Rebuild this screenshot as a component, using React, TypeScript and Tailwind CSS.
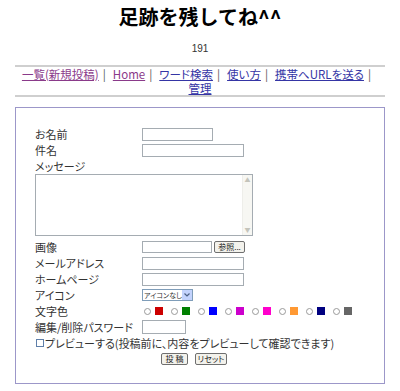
import React from 'react';

// 文字色の選択肢
const colors = ['#cc0000', '#008000', '#0000ff', '#cc00cc', '#ff00cc', '#ff9933', '#000080', '#666666'];

const jp = "font-['Noto_Sans_CJK_JP',sans-serif] [font-feature-settings:'palt']";

const Field = ({ w }: { w: string }) => (
  <input type="text" className={`${w} h-[13px] border border-[#a5acb2] bg-white outline-none`} />
);

const Row = ({ label, children }: { label: string; children?: React.ReactNode }) => (
  <div className="flex h-[16px] items-center">
    <span className="w-[107px] shrink-0 whitespace-nowrap leading-[16px]">{label}</span>
    {children}
  </div>
);

const SmallButton = ({ label, w }: { label: string; w: string }) => (
  <button
    type="button"
    className={`${w} h-[12px] whitespace-nowrap rounded-[2px] border border-[#6f6f6f] bg-[#f3f2ec] text-[8px] leading-[10px] text-[#222]`}
  >
    {label}
  </button>
);

const Nav = () => {
  const links = [
    { name: '一覧(新規投稿)', visited: true },
    { name: 'Home', visited: true },
    { name: 'ワード検索', visited: false },
    { name: '使い方', visited: false },
    { name: '携帯へURLを送る', visited: false },
  ];
  return (
    <div className="mx-[15px] border-y-2 border-[#cfcfcf] text-center text-[11px] leading-[14px]">
      <div className="whitespace-nowrap text-[11.5px]">
        {links.map((l, i) => (
          <span key={i}>
            <a href="#" className={`underline ${l.visited ? 'text-[#8a3a8a]' : 'text-[#3535a5]'}`}>
              {l.name}
            </a>
            <span className="ml-[4px] mr-[7px] text-[#555]">|</span>
          </span>
        ))}
      </div>
      <div className="text-[11.5px]">
        <a href="#" className="underline text-[#3535a5]">管理</a>
      </div>
    </div>
  );
};

const PostForm = () => {
  return (
    <div className="mx-[15px] mt-[10px] border border-[#9c97c9] bg-white pl-[19px] pt-[18px] pb-[16px] text-[11px] text-[#333]">
      <div className="w-[318px]">
        <Row label="お名前"><Field w="w-[71px]" /></Row>
        <Row label="件名"><Field w="w-[102px]" /></Row>
        <Row label="メッセージ" />
        <div className="flex h-[62px] w-[218px] border border-[#a5acb2] bg-white">
          <textarea className="flex-1 resize-none outline-none" />
          <div className="flex w-[10px] flex-col justify-between border-l border-[#eeeeea] bg-[#f7f7f3] py-[2px] text-[6px] leading-[6px] text-[#c4c4bb]">
            <span className="text-center">▲</span>
            <span className="text-center">▼</span>
          </div>
        </div>
        <div className="mt-[3px]">
          <Row label="画像">
            <input type="text" className="h-[12px] w-[70px] border border-[#a5acb2] outline-none" />
            <span className="ml-[2px] flex"><SmallButton label="参照..." w="w-[31px]" /></span>
          </Row>
        </div>
        <Row label="メールアドレス"><Field w="w-[102px]" /></Row>
        <Row label="ホームページ"><Field w="w-[102px]" /></Row>
        <Row label="アイコン">
          <div className="flex h-[12px] w-[51px] items-center border border-[#7f9db9] bg-white">
            <span className="flex-1 overflow-hidden whitespace-nowrap pl-[1px] text-[7px] leading-[10px]">アイコンなし</span>
            <span className="flex h-[10px] w-[10px] shrink-0 items-center justify-center bg-[#c3d3fd]">
              <svg width="6" height="4" viewBox="0 0 6 4">
                <path d="M0.5 0.5 L3 3 L5.5 0.5" fill="none" stroke="#4d6185" strokeWidth="1.2" />
              </svg>
            </span>
          </div>
        </Row>
        <Row label="文字色">
          <div className="flex items-center pl-[2px]">
            {colors.map((c, i) => (
              <span key={i} className="mr-[8px] flex items-center">
                <span className="h-[7px] w-[7px] rounded-full border border-[#9a9a9a] bg-white" />
                <span className="ml-[4px] h-[8px] w-[8px]" style={{ backgroundColor: c }} />
              </span>
            ))}
          </div>
        </Row>
        <Row label="編集/削除パスワード">
          <input type="text" className="h-[14px] w-[44px] border border-[#a5acb2] outline-none" />
        </Row>
        <div className="flex h-[16px] items-center whitespace-nowrap">
          <span className="ml-[1px] mr-[1px] h-[8px] w-[8px] border border-[#5f7fa9] bg-white" />
          <span className="leading-[16px]">プレビューする(投稿前に、内容をプレビューして確認できます)</span>
        </div>
        <div className="flex h-[16px] items-center justify-center gap-[7px]">
          <SmallButton label="投 稿" w="w-[27px]" />
          <SmallButton label="リセット" w="w-[32px]" />
        </div>
      </div>
    </div>
  );
};

const App = () => {
  return (
    <div className={`h-[391px] w-[400px] overflow-hidden bg-white ${jp}`}>
      <h1 className="pt-[3px] text-center text-[20px] font-bold leading-[28px] text-black [font-feature-settings:normal]">
        足跡を残してね^^
      </h1>
      <div className="mt-[12px] mb-[10px] text-center font-['Liberation_Sans',sans-serif] text-[10px] leading-[12px] text-[#333]">
        191
      </div>
      <Nav />
      <PostForm />
    </div>
  );
};

export default App;
